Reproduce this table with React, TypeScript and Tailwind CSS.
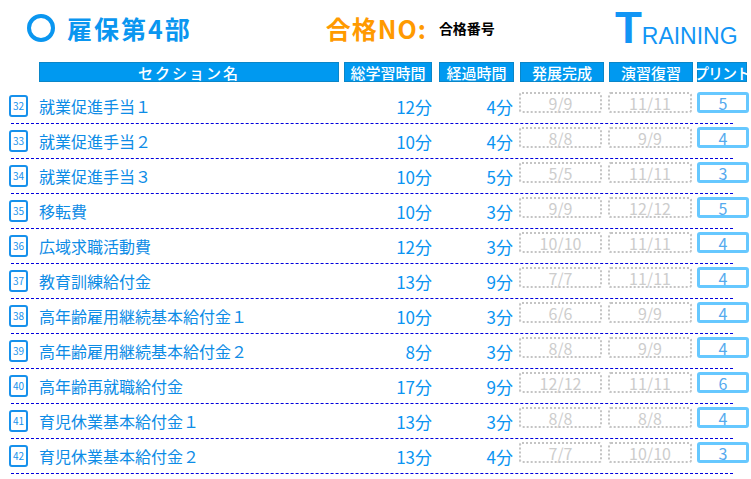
const rows = [
  { no: 32, name: "就業促進手当１", total: "12分", spent: "4分", dev: "9/9", ex: "11/11", print: "5" },
  { no: 33, name: "就業促進手当２", total: "10分", spent: "4分", dev: "8/8", ex: "9/9", print: "4" },
  { no: 34, name: "就業促進手当３", total: "10分", spent: "5分", dev: "5/5", ex: "11/11", print: "3" },
  { no: 35, name: "移転費", total: "10分", spent: "3分", dev: "9/9", ex: "12/12", print: "5" },
  { no: 36, name: "広域求職活動費", total: "12分", spent: "3分", dev: "10/10", ex: "11/11", print: "4" },
  { no: 37, name: "教育訓練給付金", total: "13分", spent: "9分", dev: "7/7", ex: "11/11", print: "4" },
  { no: 38, name: "高年齢雇用継続基本給付金１", total: "10分", spent: "3分", dev: "6/6", ex: "9/9", print: "4" },
  { no: 39, name: "高年齢雇用継続基本給付金２", total: "8分", spent: "3分", dev: "8/8", ex: "9/9", print: "4" },
  { no: 40, name: "高年齢再就職給付金", total: "17分", spent: "9分", dev: "12/12", ex: "11/11", print: "6" },
  { no: 41, name: "育児休業基本給付金１", total: "13分", spent: "3分", dev: "8/8", ex: "8/8", print: "4" },
  { no: 42, name: "育児休業基本給付金２", total: "13分", spent: "4分", dev: "7/7", ex: "10/10", print: "3" },
];

function HeadCell({ label, width, className = "" }: { label: string; width: string; className?: string }) {
  return (
    <div
      className={`${width} h-[20px] flex items-center justify-center whitespace-nowrap bg-[#0099f0] border border-[#0a86c8] text-white text-[15px] leading-none font-medium ${className}`}
    >
      {label}
    </div>
  );
}

function GreyBox({ value, width }: { value: string; width: string }) {
  return (
    <div
      className={`${width} h-[21px] mt-[-7px] flex items-center justify-center rounded-[3px] border-2 border-dotted border-[#c4c4c4] text-[#cdcdcd] text-[16px] leading-none`}
    >
      {value}
    </div>
  );
}

export default function App() {
  return (
    <div
      className="w-[751px] h-[479px] bg-white overflow-hidden relative"
      style={{ fontFamily: '"Noto Sans CJK JP", "Noto Sans", sans-serif' }}
    >
      {/* title */}
      <div className="flex items-center h-[54px] pt-[2px]">
        <div className="ml-[27px] w-[28px] h-[28px] rounded-full border-[4px] border-[#0a96f0]" />
        <div className="ml-[12px] text-[25px] font-bold text-[#0a96f0] tracking-[2px] leading-none">雇保第4部</div>
        <div className="ml-[134px] text-[25px] font-bold text-[#ff9a00] leading-none tracking-[1px]">合格NO:</div>
        <div className="ml-[12px] text-[14px] font-bold text-black leading-none">合格番号</div>
        <div className="ml-[120px] flex items-end text-[#1195f5] leading-none" style={{ fontFamily: '"Liberation Sans", Arial, sans-serif' }}>
          <span className="text-[44px] font-bold">T</span>
          <span className="text-[23px] mb-[2px]">RAINING</span>
        </div>
      </div>

      {/* header */}
      <div className="flex mt-[8px] ml-[39px]">
        <HeadCell label="セクション名" width="w-[300px]" className="tracking-[2px]" />
        <HeadCell label="総学習時間" width="w-[88px]" className="ml-[5px]" />
        <HeadCell label="経過時間" width="w-[75px]" className="ml-[7px]" />
        <HeadCell label="発展完成" width="w-[84px]" className="ml-[6px]" />
        <HeadCell label="演習復習" width="w-[84px]" className="ml-[5px]" />
        <HeadCell label="プリント" width="w-[50px]" className="ml-[4px] text-[11px] tracking-[-1px]" />
      </div>

      {/* rows */}
      <div className="mt-[7px]">
        {rows.map((r) => (
          <div key={r.no} className="relative h-[35px]">
            <div className="flex items-center h-[34px]">
              <div className="ml-[9px] w-[19px] h-[22px] flex items-center justify-center rounded-[3px] border-2 border-[#1791ec] text-[#1791ec] text-[10px] leading-none">
                {r.no}
              </div>
              <div className="ml-[11px] w-[300px] text-[16px] text-[#0d8ce6] leading-none">{r.name}</div>
              <div className="w-[93px] text-right text-[17px] text-[#0a94f2] leading-none">{r.total}</div>
              <div className="w-[81px] text-right text-[17px] text-[#0a94f2] leading-none">{r.spent}</div>
              <div className="ml-[6px] flex">
                <GreyBox value={r.dev} width="w-[83px]" />
                <div className="ml-[6px]">
                  <GreyBox value={r.ex} width="w-[84px]" />
                </div>
                <div className="ml-[5px] w-[52px] h-[21px] mt-[-7px] flex items-center justify-center rounded-[3px] border-[3px] border-[#66c8ff] text-[#55aaee] text-[16px] leading-none">
                  {r.print}
                </div>
              </div>
            </div>
            <div className="ml-[11px] w-[722px] border-b border-dashed border-[#0000dd]" />
          </div>
        ))}
      </div>
    </div>
  );
}
